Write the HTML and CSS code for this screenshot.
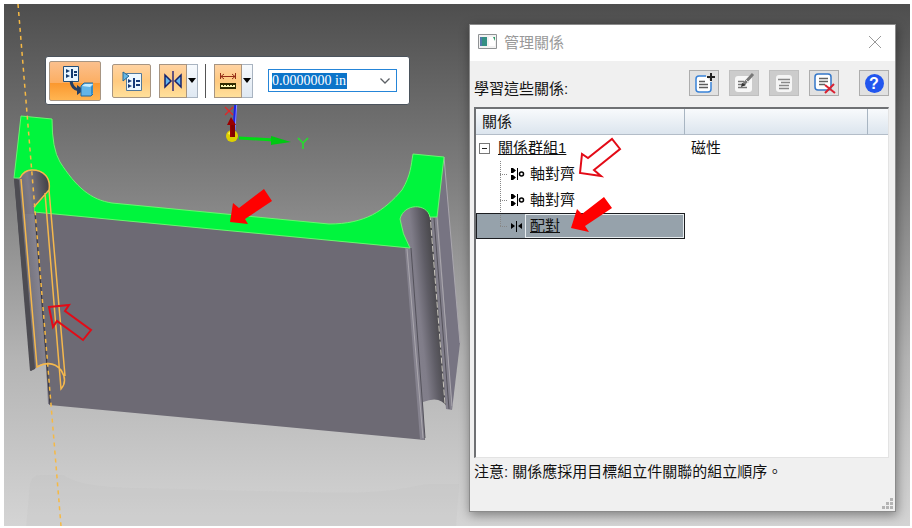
FILE: index.html
```html
<!DOCTYPE html>
<html lang="zh-Hant">
<head>
  <meta charset="UTF-8" />
  <meta name="viewport" content="width=device-width, initial-scale=1.0" />
  <title>管理關係</title>
  <link rel="stylesheet" href="styles.css">
</head>
<body>
  <main class="workspace">
    <svg class="scene" viewBox="0 0 912 528" preserveAspectRatio="xMinYMin slice" aria-hidden="true">
      <defs>
        <linearGradient id="boreLeft" gradientUnits="userSpaceOnUse" x1="22" y1="280" x2="46" y2="278">
          <stop offset="0" stop-color="#4c4b52" />
          <stop offset=".25" stop-color="#74727c" />
          <stop offset=".7" stop-color="#85838f" />
          <stop offset="1" stop-color="#8d8a97" />
        </linearGradient>
        <linearGradient id="hole" gradientUnits="userSpaceOnUse" x1="18" y1="190" x2="49" y2="186">
          <stop offset="0" stop-color="#6b6973" />
          <stop offset=".35" stop-color="#7d7a86" />
          <stop offset="1" stop-color="#414046" />
        </linearGradient>
        <linearGradient id="boreRight" gradientUnits="userSpaceOnUse" x1="408" y1="300" x2="437" y2="297">
          <stop offset="0" stop-color="#85828e" />
          <stop offset=".35" stop-color="#807d89" />
          <stop offset=".7" stop-color="#5f5d66" />
          <stop offset="1" stop-color="#4a494d" />
        </linearGradient>
      </defs>

      <!-- floor reflection -->
      <path class="reflection" d="M26 528 30 484Q32 475 41 475H63C80 485 94 486 130 488 230 490 330 494 370 492 410 490 415 484 436 484H459L456 528Z" />

      <!-- left bore -->
      <path fill="url(#boreLeft)" d="M14 178 34 178 36 211 51 404 48 404 46 364Q40 363 36 368L31 371Z" />
      <path fill="#4d4c52" d="M14 178 19 180 35 369 30 371Z" />
      <!-- front face -->
      <path fill="#6d6a74" d="M34 211 410 248 425 440 49 405Z" />
      <path stroke="#38363d" d="M35 213 50 404" />

      <!-- right bore -->
      <path fill="url(#boreRight)" d="M400 215Q405 203 418 204 429 207 431 217L447 407Q440 395 423 402L424 440 420 439 405 249Z" />
      <path fill="#827f8b" d="M431 216 438 217 452 410 446 409Z" />
      <path fill="#777482" d="M438 216 444 157 460 343 452 410Z" />
      <path stroke="#aaa7ae" fill="none" d="M444 157 460 343M437 217 452 406M407 249 423 438" />
      <path stroke="#c8c5bd" stroke-dasharray="6 2" d="M430 214 445 404" />
      <path stroke="#54525b" fill="none" d="M434 218 449 409M411 248 425 438" />

      <!-- top face -->
      <path fill="#00f53d" stroke="#67f76e" d="M21 116 52 119Q52 149 60 162C76 187 91 200 112 203L329 224C365 224 384 211 402 190 411 175 411 165 413 154L444 157 437 217 430 217C427 203 404 203 400 219Q402 234 410 248L34 212 34 207 49 190C51 178 44 170 32 170Q24 170 20 178L14 178Z" />
      <path fill="url(#hole)" d="M20 178Q24 170 32 170C44 170 51 178 49 190Q46 196 34 207V214H23Z" />

      <!-- selected cylinder -->
      <g class="picked">
        <path d="M20 178Q24 170 32 170C44 170 51 178 49 190L34 207M21 179 37 367Q52 359 61 370 68 381 61 389L45 193M49 190 65 376" />
      </g>
      <path class="axis" d="M18 4 61 526" />

      <!-- origin triad -->
      <path stroke="#1c21e6" stroke-width="3" d="M236 100 234 130" />
      <path stroke="#8d91ff" d="M237 100 235 130" />
      <path stroke="#e12727" stroke-width="1.3" d="M225 107 233 115M233 107 225 115" />
      <circle cx="232" cy="136" r="6" fill="#ded000" />
      <path fill="#fff34c" d="M228 134Q230 130 234 131L231 135Z" />
      <path fill="#9a0000" d="M230 137V125H227L231 117 236 125H234V137Z" />
      <path fill="#830000" d="M231 125H235V137H232Z" />
      <path stroke="#00dc13" stroke-width="3" d="M239 138 274 140" />
      <path fill="#00c812" d="M271 136 291 142 271 145Z" />
      <path stroke="#20e329" stroke-width="1.5" fill="none" d="M298 138 303 143 308 138M303 143V149" />
    </svg>

    <div class="command-bar">
      <button class="tool tool-large" aria-label="放置零件">
        <svg width="36" height="36" viewBox="0 0 36 36">
          <path fill="#e9f6ff" stroke="#244f79" d="M6.500 3.500H21.500V18.500H6.500Z" />
          <path fill="#163c70" d="M9 6 13 8 9 10ZM9 11 13 13 9 15ZM14 6H16V15H14ZM17 8H20V10H17ZM17 11H20V13H17Z" />
          <path fill="none" stroke="#263e63" stroke-width="3" d="M14 18Q15 26 22 27" />
          <path fill="#263e63" d="M20 22 27 27 20 32Z" />
          <path fill="#63b5e8" stroke="#24689c" d="M24 23 27 20H37V30L34 33H24Z" />
          <path fill="#c7edff" d="M25 23 28 21H36L33 24Z" />
          <path fill="#348bc6" d="M34 24 36 22V30L34 32Z" />
        </svg>
      </button>
      <button class="tool tool-relation" aria-label="關係">
        <svg width="24" height="24" viewBox="0 0 24 24">
          <path fill="#edf8ff" stroke="#537999" d="M6.500 4.500H21.500V21.500H6.500Z" />
          <path fill="#65b7e5" stroke="#246895" d="M3 3 9 7 3 12Z" />
          <path fill="#173b78" d="M8 10 12 12 8 14ZM8 15 12 17 8 19ZM13 9H15V19H13ZM16 11H20V13H16ZM16 15H20V17H16Z" />
        </svg>
      </button>
      <div class="split">
        <button class="tool" aria-label="配對">
          <svg width="22" height="24" viewBox="0 0 22 24">
            <path fill="#65b6ed" stroke="#17236c" stroke-width="1.500" d="M3 6 9 12 3 18ZM19 6 13 12 19 18Z" />
            <path stroke="#302b79" stroke-width="1.500" d="M11 2V22" />
          </svg>
        </button>
        <button class="drop" aria-label="配對選項"></button>
      </div>
      <span class="divider"></span>
      <div class="split">
        <button class="tool" aria-label="距離">
          <svg width="22" height="24" viewBox="0 0 22 24">
            <path stroke="#942d17" fill="none" d="M3.500 4V10M18.500 4V10M4 7.500H18M7 5 4 7.500 7 10M15 5 18 7.500 15 10" />
            <path fill="#302b00" d="M3 14H19V20H3Z" />
            <path fill="#fffbb4" d="M4 16H18V18H4Z" />
            <path stroke="#302b00" d="M6.500 14V17M9.500 14V17M12.500 14V17M15.500 14V17" />
          </svg>
        </button>
        <button class="drop" aria-label="距離選項"></button>
      </div>
      <div class="offset-box">
        <input class="offset" type="text" value="0.0000000 in" aria-label="偏移值">
        <button class="chevron" aria-label="偏移值清單">
          <svg width="12" height="8" viewBox="0 0 12 8"><path fill="none" stroke="#5c6065" stroke-width="1.300" d="M1.500 1.500 6 6 10.500 1.500" /></svg>
        </button>
      </div>
    </div>

    <section class="dialog" role="dialog" aria-labelledby="dialog-title">
      <header class="titlebar">
        <svg width="19" height="15" viewBox="0 0 19 15">
          <path fill="#f2f2f2" stroke="#8f9294" d="M.5.5H18.500V14.500H.5Z" />
          <path fill="#348f83" d="M2 3H9V12H2Z" />
          <path fill="#5078ad" d="M2 3H4V12H2Z" />
          <path fill="#fff" d="M11 3H17V12H11Z" />
          <path fill="#2d9a67" d="M15 3H17V7Z" />
        </svg>
        <h1 id="dialog-title">管理關係</h1>
        <button class="close" aria-label="關閉">
          <svg width="14" height="14" viewBox="0 0 14 14"><path stroke="#999" d="M1 1 13 13M13 1 1 13" /></svg>
        </button>
      </header>
      <div class="dialog-body">
        <div class="actions">
          <span class="caption">學習這些關係:</span>
          <button class="action" aria-label="新增群組">
            <svg width="24" height="24" viewBox="0 0 24 24">
              <path fill="#fff" stroke="#3882d7" stroke-width="1.500" d="M14 5H7Q4 5 4 8V18Q4 21 7 21H16Q19 21 19 18V11" />
              <path stroke="#5d5d5d" stroke-width="1.500" d="M7 10.500H13M7 13.500H16M7 16.500H16" />
              <path stroke="#222" stroke-width="2" d="M19 2V10M15 6H23" />
            </svg>
          </button>
          <button class="action" aria-label="編輯" disabled>
            <svg width="24" height="24" viewBox="0 0 24 24">
              <rect x="3" y="5" width="17" height="16" rx="3" fill="#f7f7f7" />
              <path stroke="#777" stroke-width="1.500" d="M6 10.500H12M6 13.500H12M6 16.500H15" />
              <path stroke="#777" stroke-width="3" d="M11 14 21 3" />
              <path fill="#333" d="M9 16 10 12 14 14Z" />
              <path stroke="#ddd" d="M14 9 17 12" />
            </svg>
          </button>
          <button class="action" aria-label="清單" disabled>
            <svg width="24" height="24" viewBox="0 0 24 24">
              <rect x="4" y="4" width="16" height="17" rx="3" fill="#f5f5f5" />
              <path stroke="#888" stroke-width="1.500" d="M6 8.500H18M9 11.500H18M7 14.500H17M7 17.500H17" />
            </svg>
          </button>
          <button class="action" aria-label="刪除">
            <svg width="24" height="24" viewBox="0 0 24 24">
              <rect x="3" y="3" width="16" height="16" rx="3" fill="#fff" stroke="#3477c9" stroke-width="1.500" />
              <path stroke="#626262" stroke-width="1.500" d="M7 7.500H16M7 10.500H16M7 13.500H13" />
              <path stroke="#d92232" stroke-width="2" d="M13 14 23 22M22 13 13 22" />
            </svg>
          </button>
          <button class="action help" aria-label="說明"><span>?</span></button>
        </div>

        <div class="list">
          <table class="relations">
            <colgroup><col class="col-name"><col class="col-type"><col></colgroup>
            <thead>
              <tr><th>關係</th><th></th><th></th></tr>
            </thead>
            <tbody>
              <tr>
                <td><div class="node group"><button class="toggle" aria-label="收合"></button><span class="link">關係群組1</span></div></td>
                <td>磁性</td>
                <td></td>
              </tr>
              <tr>
                <td><div class="node leaf">
                  <svg class="mark" width="16" height="14" viewBox="0 0 16 14"><path d="M2 1H4L7 3.500 4 6H2ZM2 8H4L7 10.500 4 13H2ZM8 1H9V13H8Z" /><circle cx="12.500" cy="7" r="2" fill="none" stroke="#000" stroke-width="1.500" /></svg>
                  <span class="name">軸對齊</span></div></td>
                <td></td><td></td>
              </tr>
              <tr>
                <td><div class="node leaf">
                  <svg class="mark" width="16" height="14" viewBox="0 0 16 14"><path d="M2 1H4L7 3.500 4 6H2ZM2 8H4L7 10.500 4 13H2ZM8 1H9V13H8Z" /><circle cx="12.500" cy="7" r="2" fill="none" stroke="#000" stroke-width="1.500" /></svg>
                  <span class="name">軸對齊</span></div></td>
                <td></td><td></td>
              </tr>
              <tr class="selected">
                <td><div class="node leaf last">
                  <svg class="mark" width="16" height="14" viewBox="0 0 16 14"><path d="M2 4 6 7 2 10ZM7 2H8V13H7ZM13 4 9 7 13 10Z" /></svg>
                  <span class="name"><span class="link">配對</span></span></div></td>
                <td></td><td></td>
              </tr>
            </tbody>
          </table>
        </div>
        <p class="note">注意: 關係應採用目標組立件關聯的組立順序。</p>
      </div>
      <svg class="grip" width="12" height="12" viewBox="0 0 12 12" aria-hidden="true">
        <path fill="#b4b4b4" d="M8 0H11V3H8ZM4 4H7V7H4ZM8 4H11V7H8ZM0 8H3V11H0ZM4 8H7V11H4ZM8 8H11V11H8Z" />
      </svg>
    </section>

    <!-- callout arrows -->
    <svg class="callouts" viewBox="0 0 912 528" preserveAspectRatio="xMinYMin slice" aria-hidden="true">
      <path class="solid" d="M230 222 233 203 239 208 264 189 272 201 245 219 248 224Z" />
      <path class="solid" d="M571 228 577 209 582 214 604 197 612 208 585 226 589 232Z" />
      <path class="hollow" d="M580 173 582 154 588 158 612 139 620 149 594 170 601 176Z" />
      <path class="hollow" d="M49 307 69 305 65 311 91 330 83 340 57 321 53 327Z" />
    </svg>
  </main>
</body>
</html>
```

FILE: styles.css
```css
* {
  box-sizing: border-box;
}
body {
  margin: 0;
  padding: 4px 2px 2px 4px;
  background: #fff;
  color: #111;
  font-family: "Liberation Sans", "Noto Sans CJK TC", sans-serif;
  font-size: 15px;
}
button {
  margin: 0;
  padding: 0;
  font: inherit;
}
svg {
  display: block;
  flex: none;
}
.workspace {
  position: relative;
  height: calc(100vh - 6px);
  min-height: 516px;
  overflow: hidden;
  background: linear-gradient(#4e4e4e, #828282 36%, #b4b4b4 68%, #d4d4d4);
}
.scene,
.callouts {
  position: absolute;
  top: -4px;
  left: -4px;
  width: 912px;
  height: 528px;
  pointer-events: none;
}
.reflection {
  fill: #bdbdbd;
  opacity: 0.2;
}
.picked {
  fill: none;
  stroke: #f5b84d;
  stroke-width: 1.5;
}
.axis {
  stroke: #f6b944;
  stroke-width: 1.5;
  stroke-dasharray: 4 4;
}
.solid {
  fill: #f00;
}
.hollow {
  fill: none;
  stroke: #e30b17;
  stroke-width: 2;
}

/* floating command bar */
.command-bar {
  position: absolute;
  top: 52px;
  left: 41px;
  display: flex;
  align-items: center;
  height: 49px;
  padding: 0 12px 0 3px;
  background: #fff;
  border: 1px solid #4b535c;
  border-radius: 3px;
}
.tool {
  display: flex;
  align-items: center;
  justify-content: center;
  width: 28px;
  height: 34px;
  border: 1px solid #a79582;
  background: linear-gradient(#ffd3a3, #ffca80 50%, #ffe09b);
}
.tool-large {
  width: 52px;
  height: 40px;
  margin-right: 11px;
  border-radius: 2px;
  background: linear-gradient(#fbc08d, #fcae62 55%, #fb982f 56%, #ffb552);
}
.tool-relation {
  width: 39px;
  margin-right: 8px;
  border-radius: 2px;
}
.split {
  display: flex;
}
.drop {
  display: flex;
  align-items: center;
  justify-content: center;
  width: 11px;
  height: 34px;
  border: 1px solid #a9b4c1;
  border-left: 0;
  background: linear-gradient(#f7fafd, #dfe8f2);
}
.drop::before {
  content: "";
  border: 4px solid transparent;
  border-top: 5px solid #000;
  border-bottom: 0;
}
.divider {
  width: 1px;
  height: 34px;
  margin: 0 8px 0 7px;
  background: #555;
}
.offset-box {
  display: flex;
  align-items: center;
  width: 129px;
  height: 23px;
  margin-left: 15px;
  padding: 0 3px;
  border: 1px solid #2585d8;
}
.offset {
  width: 75px;
  height: 16px;
  padding: 0;
  border: 0;
  background: #0b74c9;
  color: #fff;
  font-family: "Liberation Serif", serif;
  font-size: 14px;
  line-height: 16px;
}
.chevron {
  margin-left: auto;
  padding: 2px;
  border: 0;
  background: none;
}

/* relations dialog */
.dialog {
  position: absolute;
  top: 20px;
  right: 14px;
  display: flex;
  flex-direction: column;
  width: 427px;
  height: 488px;
  background: #f0f0f0;
  border: 1px solid #8b8b8b;
  box-shadow: 1px 3px 10px rgba(0, 0, 0, 0.4);
}
.titlebar {
  display: flex;
  align-items: center;
  gap: 7px;
  height: 36px;
  padding: 0 13px 3px 8px;
  background: #fff;
}
.titlebar h1 {
  margin: 0;
  color: #999;
  font-size: 15px;
  font-weight: 400;
}
.close {
  margin-left: auto;
  border: 0;
  background: none;
}
.dialog-body {
  display: flex;
  flex: 1;
  flex-direction: column;
  padding: 9px 6px 0 4px;
}
.actions {
  display: flex;
  align-items: center;
  gap: 10px;
  height: 26px;
}
.caption {
  margin-right: auto;
  padding-top: 8px;
}
.action {
  display: flex;
  align-items: center;
  justify-content: center;
  width: 30px;
  height: 26px;
  border: 1px solid #adadad;
  background: #e1e1e1;
}
.action:disabled {
  border-color: #bfbfbf;
  background: #ccc;
}
.help {
  margin-left: 10px;
}
.help span {
  width: 19px;
  height: 19px;
  border-radius: 50%;
  background: #2256ee;
  color: #fff;
  font-size: 16px;
  font-weight: 700;
  line-height: 19px;
}
.list {
  height: 351px;
  margin-top: 11px;
  border: 1px solid #e3e3e3;
  border-top: 2px solid #6f7174;
  border-left: 2px solid #6f7174;
  background: #fff;
}
.relations {
  width: 100%;
  table-layout: fixed;
  border-spacing: 0;
}
.col-name {
  width: 209px;
}
.col-type {
  width: 183px;
}
.relations th {
  height: 26px;
  padding: 0 6px;
  border-right: 1px solid #a8b5c2;
  border-bottom: 1px solid #b3bdc8;
  background: linear-gradient(#f8fafc, #dce5ee);
  font-weight: 400;
  text-align: left;
  line-height: 22px;
}
.relations th:last-child {
  border-right: 0;
}
.relations td {
  height: 26px;
  padding: 0;
  line-height: 22px;
}
.relations td + td {
  padding-left: 6px;
}
.node {
  display: flex;
  align-items: center;
  height: 26px;
}
.group {
  gap: 8px;
  padding-left: 3px;
}
.toggle {
  display: flex;
  align-items: center;
  justify-content: center;
  width: 11px;
  height: 11px;
  border: 1px solid #777;
  background: #fff;
}
.toggle::before {
  content: "";
  width: 5px;
  height: 1px;
  background: #222;
}
.link {
  text-decoration: underline;
}
.leaf {
  padding-left: 24px;
  background:
    repeating-linear-gradient(#888 0 1px, transparent 1px 2px) 24px 0 / 1px 26px no-repeat,
    repeating-linear-gradient(90deg, #888 0 1px, transparent 1px 2px) 24px 13px / 8px 1px no-repeat;
}
.last {
  background-size: 1px 13px, 8px 1px;
}
.mark {
  margin-left: 9px;
}
.name {
  flex: 1;
  padding-left: 5px;
}
.selected td:first-child {
  background: #96a2ab;
  outline: 1px solid #1b1d20;
  outline-offset: -1px;
}
.selected .name {
  height: 24px;
  margin-right: 1px;
  padding-left: 4px;
  border: 1px solid #e8edf0;
}
.note {
  margin: 2px 0 0;
  line-height: 24px;
}
.grip {
  position: absolute;
  right: 1px;
  bottom: 1px;
}
```
